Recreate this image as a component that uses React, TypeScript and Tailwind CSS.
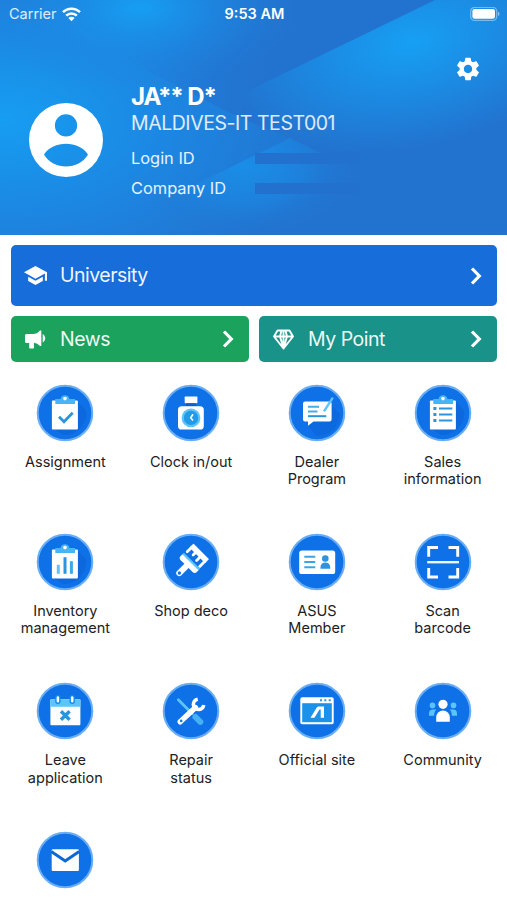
import React from 'react';
import { MdSettings } from 'react-icons/md';
import { clsx } from 'clsx';

const LIGHT = '#5cc4fb';
const MID = '#2b94dc';

/** Clipboard body shared by the assignment, sales and inventory icons. */
function Clipboard({ children }: { children: React.ReactNode }) {
  return (
    <>
      <path d="M42 18 50 26 A22 22 0 0 1 27 51 L18 45Z" fill="#0b62d6" opacity=".6" />
      <rect x="15.9" y="16.4" width="26" height="29.2" rx="1" fill="#fff" />
      <path d="M19.3 15h5.2a4.6 4.6 0 0 1 9 0H39v5H19.3z" fill="#49b4f5" />
      <circle cx="29" cy="14.6" r="1.8" fill="#fff" />
      {children}
    </>
  );
}

const icons = {
  assignment: (
    <Clipboard>
      <path d="m23 32.8 5 4.9 8.7-9" fill="none" stroke={MID} strokeWidth="2.8" />
    </Clipboard>
  ),
  clock: (
    <>
      <rect x="22.7" y="12.5" width="12.7" height="6.8" rx=".7" fill="#fff" />
      <rect x="24" y="19.3" width="10" height="3" fill="#0b5fcf" />
      <rect x="16" y="22.2" width="25.8" height="23.3" rx="3.6" fill="#fff" />
      <circle cx="29" cy="33.9" r="9.4" fill={LIGHT} />
      <circle cx="29" cy="33.9" r="7.2" fill="#239ae8" />
      <path d="m31 30.2-2.3 3.5 2.3 2.7" fill="none" stroke="#fff" strokeWidth="1.6" />
    </>
  ),
  dealer: (
    <>
      <path d="m44 22 8 8A23 23 0 0 1 28 52l-8-10.5z" fill="#0b62d6" opacity=".5" />
      <path d="M17 17.5h24.6a2 2 0 0 1 2 2v16a2 2 0 0 1-2 2H25.5L20 41.7v-4.2h-3a2 2 0 0 1-2-2v-16a2 2 0 0 1 2-2z" fill="#fff" />
      <path d="M20 22.8h11M20 27.5h9.5" stroke="#43aeef" strokeWidth="2" />
      <path d="M20 32.2h18.3" stroke={MID} strokeWidth="2" />
      <path d="M44.8 13.6 36 27.4" stroke={LIGHT} strokeWidth="2.4" />
    </>
  ),
  sales: (
    <Clipboard>
      <path d="M25 24.5h13.3M25 30.5h13.3M25 36.5h13.3" stroke={MID} strokeWidth="2" />
      <path d="M19.4 24.5h3M19.4 30.5h3M19.4 36.5h3" stroke={MID} strokeWidth="2.8" />
    </Clipboard>
  ),
  inventory: (
    <Clipboard>
      <path d="M22.3 31.8v9" stroke={LIGHT} strokeWidth="3" />
      <path d="M29 24.2v16.6" stroke={MID} strokeWidth="3" />
      <path d="M35.4 28.2v12.6" stroke="#3aa9eb" strokeWidth="3" />
    </Clipboard>
  ),
  deco: (
    <g transform="translate(29 29) rotate(45)">
      <rect x="-11.3" y="-14.8" width="22" height="5.6" rx=".6" fill="#fff" />
      <path d="M-9.9-11v6.500M-3.500-11v4.500M2.900-11v6" stroke="#fff" strokeWidth="2.800" strokeLinecap="round" />
      <path d="M9.300-11v9" stroke="#fff" strokeWidth="2.800" />
      <rect x="-11.6" y="-1.600" width="22.8" height="2.400" fill={LIGHT} />
      <path d="M-11.6.6h22.8V3a3 3 0 0 1-3 3h-5.6v10.2a3 3 0 0 1-6 0V6h-5.2a3 3 0 0 1-3-3z" fill="#fff" />
      <circle cx="-.4" cy="16" r="1.7" fill="#1176e8" />
    </g>
  ),
  member: (
    <>
      <rect x="11.2" y="17.5" width="36" height="23.5" rx="2.6" fill="#fff" />
      <path d="M16.3 23.8h11M16.3 29h11M16.3 34.2h11" stroke="#3ba5e4" strokeWidth="1.9" />
      <circle cx="37.3" cy="25.5" r="3.3" fill={MID} />
      <path d="M32.5 35.8v-1.5a4.8 4.8 0 0 1 9.7 0v1.5z" fill={MID} />
    </>
  ),
  scan: (
    <>
      <path d="M14.7 23.7v-9.2H24M34.5 14.5h9.2v9.2M14.7 35v9H24M34.5 44h9.2v-9" fill="none" stroke="#fff" strokeWidth="2.9" />
      <path d="M13.2 29.2H45" stroke="#e6f8ff" strokeWidth="2.4" />
    </>
  ),
  leave: (
    <>
      <rect x="14.4" y="17.3" width="30" height="26" rx="1" fill="#fff" />
      <path d="M15.4 17.3h28a1 1 0 0 1 1 1v6.5h-30v-6.5a1 1 0 0 1 1-1z" fill={LIGHT} />
      <rect x="19.9" y="13.5" width="4" height="7.8" rx="2" fill="#fff" stroke="#1687e6" strokeWidth="1.4" />
      <rect x="34.2" y="13.5" width="4" height="7.8" rx="2" fill="#fff" stroke="#1687e6" strokeWidth="1.4" />
      <path d="m25 29.2 8.6 8.6m0-8.6L25 37.8" stroke={MID} strokeWidth="3.4" />
    </>
  ),
  repair: (
    <>
      <path d="m16.3 17.7 14 14" stroke={LIGHT} strokeWidth="2.8" strokeLinecap="round" />
      <path d="m33.5 35 4.8 4.8" stroke="#48b1f5" strokeWidth="6" strokeLinecap="round" />
      <path d="M18.2 39.8 33.5 25.5" stroke="#fff" strokeWidth="5.4" strokeLinecap="round" />
      <path d="M35.7 17.2A5.2 5.2 0 1 0 41.7 23" fill="none" stroke="#fff" strokeWidth="3.6" />
      <circle cx="19.2" cy="38.9" r="1.3" fill="#1176e8" />
    </>
  ),
  site: (
    <>
      <rect x="12.3" y="15.3" width="33.4" height="26.9" rx="1.8" fill="#fff" />
      <path d="M14.2 21.2h29.6v19H14.2z" fill="#1b91e9" />
      <path d="M32 18.3h2M36.3 18.3h2M40.7 18.3h2" stroke={MID} strokeWidth="2" />
      <path d="m22.5 35.8 6.3-10.3q.6-1 1.9-1h5.3v11.3h-3.3v-8.3h-1.2l-5 8.300z" fill="#fff" />
    </>
  ),
  community: (
    <>
      <circle cx="18.5" cy="23.4" r="2.8" fill={LIGHT} />
      <circle cx="39.5" cy="23.4" r="2.8" fill={LIGHT} />
      <path d="M15 33.7v-2.2a4 4 0 0 1 4-4h3.2a8 8 0 0 0-2.2 6.2zM43 33.7v-2.2a4 4 0 0 0-4-4h-3.2a8 8 0 0 1 2.2 6.2z" fill={LIGHT} />
      <circle cx="29" cy="22.3" r="4.6" fill="#fff" />
      <path d="M22.2 39.8v-4.5a6.8 6.8 0 0 1 13.6 0v4.5z" fill="#fff" />
    </>
  ),
  mail: (
    <>
      <rect x="15.7" y="18.3" width="27.2" height="21.6" rx="1.2" fill="#fff" />
      <path d="m15.2 20.4 14 9.6 14-9.6" fill="none" stroke="#0f66d6" strokeWidth="3" />
    </>
  ),
};

const menu: { icon: keyof typeof icons; label: string[] }[] = [
  { icon: 'assignment', label: ['Assignment'] },
  { icon: 'clock', label: ['Clock in/out'] },
  { icon: 'dealer', label: ['Dealer', 'Program'] },
  { icon: 'sales', label: ['Sales', 'information'] },
  { icon: 'inventory', label: ['Inventory', 'management'] },
  { icon: 'deco', label: ['Shop deco'] },
  { icon: 'member', label: ['ASUS', 'Member'] },
  { icon: 'scan', label: ['Scan', 'barcode'] },
  { icon: 'leave', label: ['Leave', 'application'] },
  { icon: 'repair', label: ['Repair', 'status'] },
  { icon: 'site', label: ['Official site'] },
  { icon: 'community', label: ['Community'] },
  { icon: 'mail', label: [] },
];

/** Faceted blue backdrop of the profile header. */
function HeaderBackdrop() {
  return (
    <svg className="absolute inset-0 h-full w-full" viewBox="0 0 507 235" preserveAspectRatio="none">
      <defs>
        <radialGradient id="left" gradientUnits="userSpaceOnUse" cx="0" cy="0" r="1" gradientTransform="translate(5 120) scale(320 185)">
          <stop offset="0" stopColor="#169df2" />
          <stop offset=".5" stopColor="#1c87e2" />
          <stop offset="1" stopColor="#2273cf" />
        </radialGradient>
        <radialGradient id="top" gradientUnits="userSpaceOnUse" cx="0" cy="0" r="1" gradientTransform="translate(140 8) scale(160 80)">
          <stop offset="0" stopColor="#169ff4" />
          <stop offset="1" stopColor="#1f80dc" stopOpacity="0" />
        </radialGradient>
        <radialGradient id="right" gradientUnits="userSpaceOnUse" cx="0" cy="0" r="1" gradientTransform="translate(412 42) rotate(-12) scale(190 105)">
          <stop offset="0" stopColor="#16a0f4" />
          <stop offset="1" stopColor="#2273cf" />
        </radialGradient>
        <radialGradient id="peak" gradientUnits="userSpaceOnUse" cx="0" cy="0" r="1" gradientTransform="translate(245 165) scale(120 75)">
          <stop offset="0" stopColor="#1a8ee7" />
          <stop offset=".5" stopColor="#1c86e0" stopOpacity=".7" />
          <stop offset="1" stopColor="#2273cf" stopOpacity="0" />
        </radialGradient>
        <linearGradient id="shade" gradientUnits="userSpaceOnUse" x1="130" y1="40" x2="270" y2="70">
          <stop offset="0" stopColor="#2273cf" stopOpacity="0" />
          <stop offset="1" stopColor="#2273cf" />
        </linearGradient>
      </defs>
      <path d="M0 0h507v235H0z" fill="url(#left)" />
      <path d="M0 0h435L250 90l-12 27-88-45L20 10z" fill="url(#shade)" />
      <path d="M0 0h435L250 90H0z" fill="url(#top)" />
      <path d="M435 0h72v235H330l-40-97-52-21 12-27z" fill="url(#right)" />
      <path d="m290 138 200 97H92z" fill="url(#peak)" />
    </svg>
  );
}

function Chevron() {
  return (
    <svg className="ml-auto h-[18px] w-3" viewBox="0 0 12 18" fill="none">
      <path d="m2 1.5 7.3 7.5L2 16.5" stroke="#fff" strokeWidth="3.2" />
    </svg>
  );
}

function Banner({ icon, label, className }: { icon: React.ReactNode; label: string; className: string }) {
  return (
    <div className={clsx('flex items-center rounded-[5px] pl-3 pr-[15px] text-[19.5px] tracking-[-0.5px] text-white/95', className)}>
      <span className="flex w-[37px] items-center">{icon}</span>
      <span className="pt-px">{label}</span>
      <Chevron />
    </div>
  );
}

export default function App() {
  return (
    <div className="h-[900px] w-[507px] overflow-hidden bg-white font-['Inter',sans-serif] text-[#202124]">
      <header className="relative h-[235px] overflow-hidden text-white">
        <HeaderBackdrop />
        <div className="relative flex h-7 items-center justify-between pl-[9px] pr-[7px] text-[14.5px]">
          <div className="flex w-[120px] items-center gap-[5px] text-white/85">
            <span>Carrier</span>
            <svg className="h-[15px] w-[19px]" viewBox="0 0 19 15" fill="none" stroke="#fff" strokeWidth="2.5">
              <path d="M1 5.2a12 12 0 0 1 17 0M4.2 8.6a7.5 7.5 0 0 1 10.6 0" />
              <path d="m9.5 14.3-3.1-3.2a4.4 4.4 0 0 1 6.200 0z" fill="#fff" stroke="none" />
            </svg>
          </div>
          <span className="text-[14.5px] font-semibold">9:53 AM</span>
          <div className="flex w-[120px] justify-end">
            <svg className="h-[15px] w-[30px]" viewBox="0 0 30 15">
              <rect x=".7" y=".4" width="26" height="13" rx="4" fill="none" stroke="#fff" strokeOpacity=".4" strokeWidth="1.3" />
              <rect x="2.4" y="2.1" width="22.6" height="9.6" rx="2.2" fill="#fff" />
              <path d="M28 4.7a2.4 2.4 0 0 1 0 4.4z" fill="#fff" fillOpacity=".5" />
            </svg>
          </div>
        </div>
        <MdSettings className="absolute right-[25px] top-[55px] h-7 w-7" />
        <div className="relative mt-[56px] flex pl-[29px]">
          <svg className="mt-[19px] h-[74px] w-[74px]" viewBox="0 0 74 74">
            <path
              fillRule="evenodd"
              d="M37 0a37 37 0 1 1 0 74a37 37 0 0 1 0-74zM37 11.3a11.1 11.1 0 1 0 0 22.2a11.1 11.1 0 0 0 0-22.2zM15 51.5c9 16 35 16 44 0c-9-14.5-35-14.5-44 0z"
              fill="#fff"
            />
          </svg>
          <div className="ml-[28px]">
            <div className="text-[24px] font-bold leading-[26px] tracking-[-1.1px]">JA** D*</div>
            <div className="text-[19.5px] leading-[26px] tracking-[-0.45px] text-white/85">MALDIVES-IT TEST001</div>
            <div className="mt-[7px] flex h-[30px] items-center text-[16.4px] text-white/90">
              <span className="w-[124px]">Login ID</span>
              <span className="h-[11px] w-[105px] bg-[#2371cf]" />
            </div>
            <div className="flex h-[30px] items-center text-[16.4px] text-white/90">
              <span className="w-[124px]">Company ID</span>
              <span className="h-[11px] w-[105px] bg-[#2371cf]" />
            </div>
          </div>
        </div>
      </header>

      <section className="ml-[11px] mr-[10px] mt-[10px] grid grid-cols-2 gap-[10px]">
        <Banner
          className="col-span-2 h-[61px] bg-[#176edb]"
          label="University"
          icon={
            <svg className="ml-[1px] h-[19px] w-[23px]" viewBox="1 3 22 18" fill="#fff">
              <path d="M12 3 1 9l11 6 9-4.91V17h2V9z" />
              <path d="M5 13.18v4L12 21l7-3.82v-4L12 17z" />
            </svg>
          }
        />
        <Banner
          className="h-[46px] bg-[#1ba35e]"
          label="News"
          icon={
            <svg className="ml-[2px] h-[19px] w-[22px]" viewBox="0 0 22 19" fill="#fff">
              <path d="M1.5 4H8q4 0 7-3.5h1.300v15.500H15q-2.500-2.700-6-3.300v5a.8.8 0 0 1-.8.8H5a.8.8 0 0 1-.8-.8V13H1.5A1.500 1.500 0 0 1 0 11.500v-6A1.500 1.500 0 0 1 1.500 4z" />
              <path d="M17.7 4a5 5 0 0 1 0 8.600z" />
            </svg>
          }
        />
        <Banner
          className="h-[46px] bg-[#199389]"
          label="My Point"
          icon={
            <svg className="ml-[2px] h-[21px] w-[21px]" viewBox="0 0 21 21" fill="none" stroke="#fff" strokeWidth="1.9" strokeLinejoin="round">
              <path d="M4.5 1.5h12L20 7.500l-9.500 12L1 7.500zM1 7.500h19M7 7.500l3.500 12 3.500-12-1.500-6M7 7.500l1.500-6M10.500 1.500v18" />
            </svg>
          }
        />
      </section>

      <main className="ml-[2.5px] mr-[1.5px] mt-[21.5px] grid grid-cols-4">
        {menu.map(({ icon, label }) => (
          <div key={icon} className="flex h-[149.2px] flex-col items-center">
            <svg className="h-[58px] w-[58px] shrink-0" viewBox="0 0 58 58">
              <circle cx="29" cy="29" r="27.3" fill="#0e71e7" stroke="#69adf4" strokeWidth="2" />
              {icons[icon]}
            </svg>
            <div className="mt-[11.5px] text-center text-[14.5px] leading-[17.3px]">
              {label.map((line) => (
                <div key={line}>{line}</div>
              ))}
            </div>
          </div>
        ))}
      </main>
    </div>
  );
}
